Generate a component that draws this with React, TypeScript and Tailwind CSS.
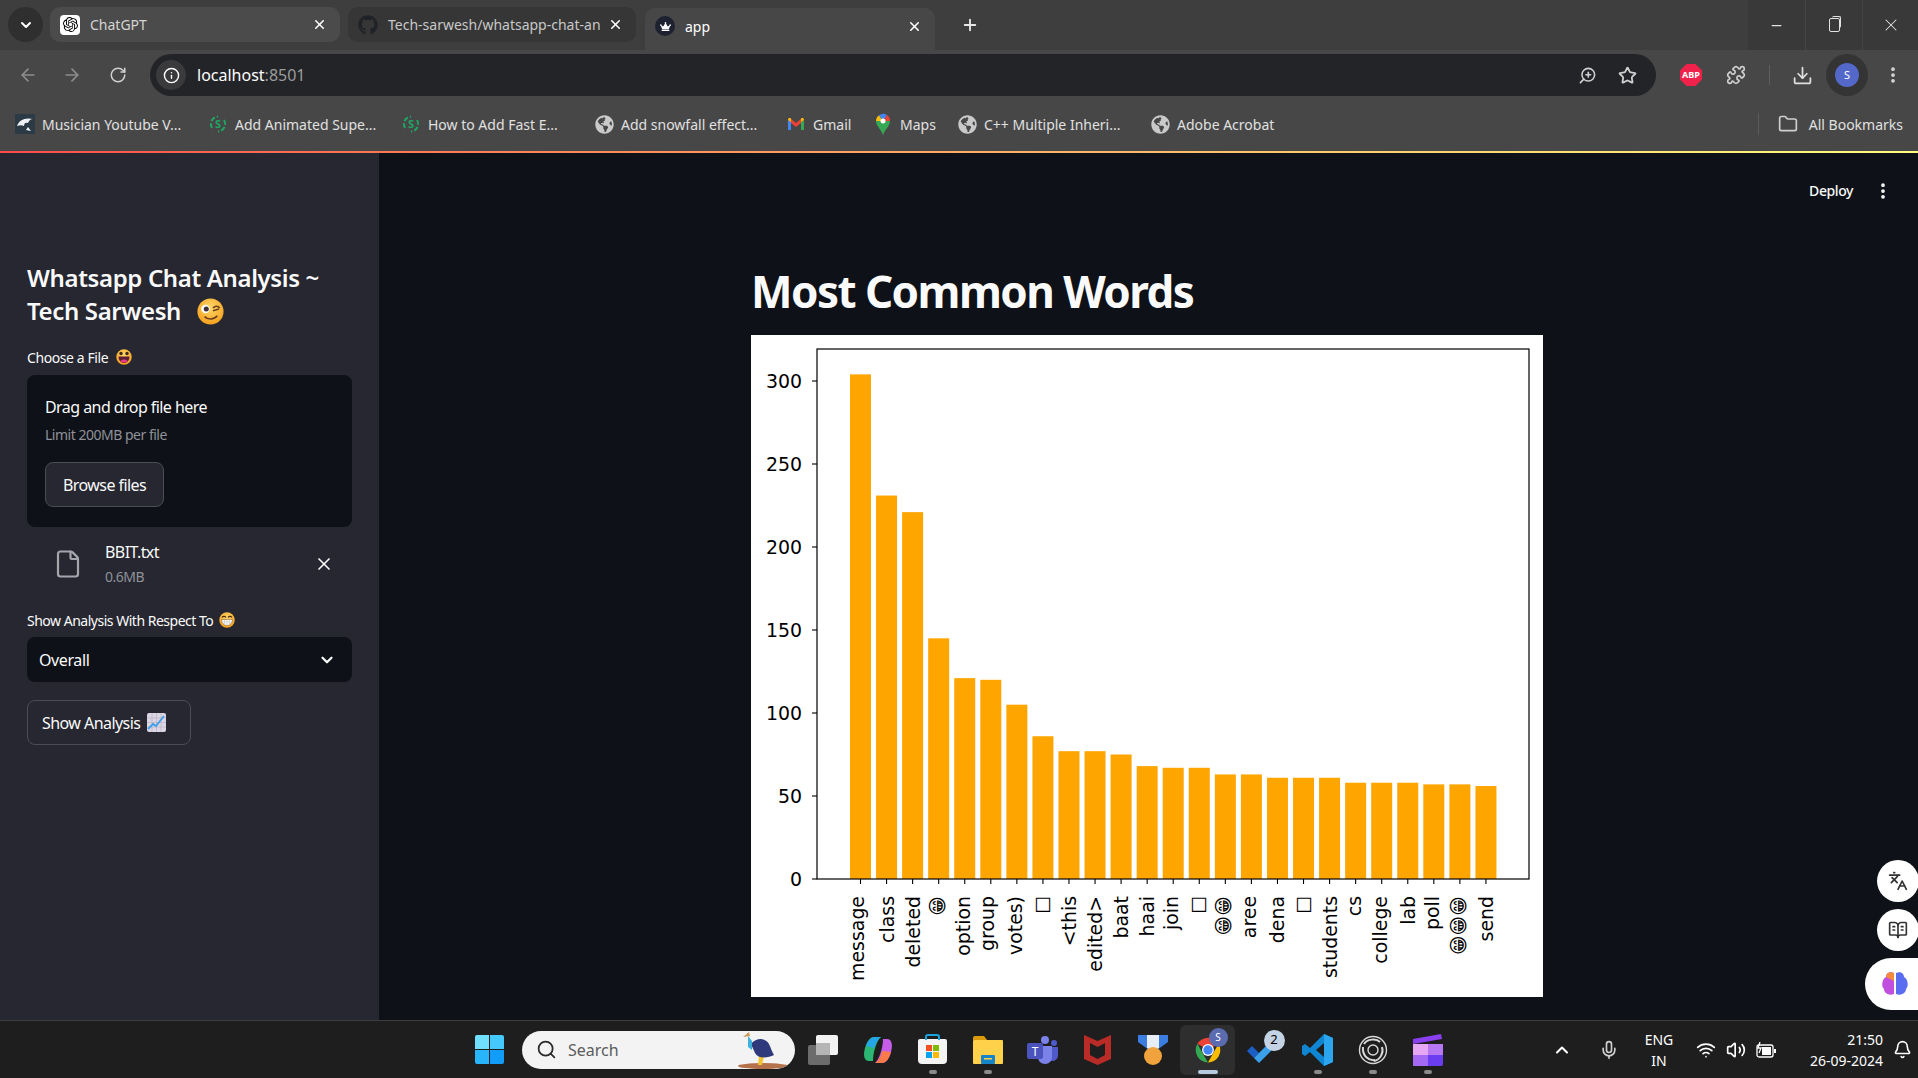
import { ArrowLeft, ArrowRight, RotateCw, Info, ZoomIn, Star, Puzzle, Download, EllipsisVertical, Folder, Minus, X, Plus, ChevronDown, ChevronUp, Mic, Wifi, Volume2, Bell, Search, File, Languages, BookOpenText } from 'lucide-react'
import { FaCrown, FaGithub, FaGlobeAmericas } from 'react-icons/fa'
import { SiOpenai } from 'react-icons/si'

const ui = "font-['Noto_Sans',sans-serif]"

function GreenIcon() {
  return (
    <svg width="20" height="20" viewBox="0 0 20 20" fill="none" stroke="#1fa463" strokeWidth="2">
      <path d="M4 14a7.5 7.5 0 0 1 6-11.4M16 6a7.5 7.5 0 0 1-6 11.4" strokeDasharray="5 2" />
      <text x="10" y="14" textAnchor="middle" fontSize="11" fontWeight="700" fill="#1fa463" stroke="none" fontFamily="Noto Sans">S</text>
    </svg>
  )
}

function PawIcon() {
  return (
    <svg width="20" height="20" viewBox="0 0 20 20">
      <rect width="20" height="20" fill="#2b3a45" />
      <path d="M2 12c2-6 8-9 16-7-3 0-4 2-5 4-2-1-4 0-4 3-2-1-4-1-7 0zM13 13l3 4-5-1z" fill="#eef2f4" />
    </svg>
  )
}

function GmailIcon() {
  return (
    <svg width="18" height="18" viewBox="0 0 18 18">
      <path d="M1 15V5l3 2v8z" fill="#4285f4" />
      <path d="M14 15V7l3-2v10z" fill="#34a853" />
      <path d="M14 4v4l-5 4-5-4V4l5 4z" fill="#ea4335" />
      <path d="M1 5c0-2 2-2.500 3-1.500V7zM17 5c0-2-2-2.500-3-1.500V7z" fill="#fbbc04" />
    </svg>
  )
}

function MapsIcon() {
  return (
    <svg width="16" height="22" viewBox="0 0 16 22">
      <path d="M8 22C6 16 1 13 1 8h14c0 5-5 8-7 14z" fill="#34a853" />
      <path d="M1 8a7 7 0 0 1 3-5.700L8 8z" fill="#fbbc04" />
      <path d="M4 2.300A7 7 0 0 1 12 2L8 8z" fill="#4285f4" />
      <path d="M12 2a7 7 0 0 1 3 6H8z" fill="#ea4335" />
      <circle cx="8" cy="8" r="2.500" fill="#fff" />
    </svg>
  )
}

const globe = <FaGlobeAmericas className="text-[19px] text-[#c9c9c9]" />

const bookmarks = [
  { icon: <PawIcon />, label: 'Musician Youtube V...', width: 'w-[193px]' },
  { icon: <GreenIcon />, label: 'Add Animated Supe...', width: 'w-[193px]' },
  { icon: <GreenIcon />, label: 'How to Add Fast E...', width: 'w-[193px]' },
  { icon: globe, label: 'Add snowfall effect...', width: 'w-[192px]' },
  { icon: <GmailIcon />, label: 'Gmail', width: 'w-[87px]' },
  { icon: <MapsIcon />, label: 'Maps', width: 'w-[84px]' },
  { icon: globe, label: 'C++ Multiple Inheri...', width: 'w-[193px]' },
  { icon: globe, label: 'Adobe Acrobat', width: 'w-[140px]' },
]

function TabStrip() {
  return (
    <div className="flex h-[50px] items-start bg-[#3e3e3e] pl-2">
      <div className="mt-[7px] flex h-[35px] w-[35px] items-center justify-center rounded-full bg-[#2f2f2f]">
        <ChevronDown size={16} strokeWidth={3} className="text-white" />
      </div>
      <div className="ml-[7px] mt-[7px] flex h-[35px] w-[290px] items-center rounded-[10px] bg-[#4b4b4b] pl-[10px] pr-[13px]">
        <span className="flex h-5 w-5 items-center justify-center rounded-[4px] bg-white"><SiOpenai size={15} className="text-black" /></span>
        <span className="ml-[10px] flex-1 text-[14px] text-[#d4d4d4]">ChatGPT</span>
        <X size={15} className="text-white" strokeWidth={2.500} />
      </div>
      <div className="ml-2 mt-[7px] flex h-[35px] w-[288px] items-center rounded-[10px] bg-[#363636] pl-[10px] pr-[13px]">
        <FaGithub size={20} className="text-[#1f2328]" />
        <span className="ml-[10px] w-[212px] overflow-hidden whitespace-nowrap text-[14px] text-[#c8c8c8]">Tech-sarwesh/whatsapp-chat-analysis</span>
        <X size={15} className="ml-auto text-white" strokeWidth={2.500} />
      </div>
      <div className="ml-[9px] mt-2 flex h-[42px] w-[290px] items-center rounded-t-[10px] bg-[#474747] pb-[6px] pl-[10px] pr-[13px]">
        <span className="flex h-5 w-5 items-center justify-center rounded-full bg-[#1e2230]"><FaCrown size={11} className="text-white" /></span>
        <span className="ml-[10px] flex-1 text-[14px] text-white">app</span>
        <X size={15} className="text-white" strokeWidth={2.500} />
      </div>
      <Plus size={18} strokeWidth={2.500} className="ml-[26px] mt-4 text-[#e8e8e8]" />
      <div className="ml-auto flex h-[50px] text-[#e2e2e2]">
        <div className="flex w-[57px] items-center justify-center bg-[#393939]"><Minus size={15} /></div>
        <div className="flex w-[57px] items-center justify-center border-l border-[#444] bg-[#393939]">
          <div className="relative h-[14px] w-[11px] rounded-[2px] border border-[#e2e2e2]">
            <div className="absolute -right-[2px] -top-[3px] h-[12px] w-[9px] rounded-[2px] border-r border-t border-[#e2e2e2]" />
          </div>
        </div>
        <div className="flex w-[56px] items-center justify-center border-l border-[#444] bg-[#393939]"><X size={20} strokeWidth={1.250} /></div>
      </div>
    </div>
  )
}

function Toolbar() {
  return (
    <div className="flex h-[50px] items-center bg-[#474747]">
      <ArrowLeft size={20} className="ml-[18px] text-[#8d8d8d]" />
      <ArrowRight size={20} className="ml-[24px] text-[#8d8d8d]" />
      <RotateCw size={18} className="ml-[27px] text-[#d0d0d0]" />
      <div className="ml-[23px] flex h-[42px] w-[1506px] items-center rounded-full bg-[#232427] pl-[6px]">
        <span className="flex h-[30px] w-[30px] items-center justify-center rounded-full bg-[#3a3a3d]"><Info size={17} className="text-white" /></span>
        <span className="ml-[11px] text-[16px] text-white">localhost<span className="text-[#9c9c9c]">:8501</span></span>
        <ZoomIn size={19} className="ml-auto -scale-x-100 text-[#d0d0d0]" />
        <Star size={19} strokeWidth={2.250} className="ml-[21px] mr-[19px] text-[#d0d0d0]" />
      </div>
      <div className="ml-[24px] flex h-[22px] w-[22px] items-center justify-center bg-[#f0224c] text-[9px] font-bold text-white [clip-path:polygon(30%_0,70%_0,100%_30%,100%_70%,70%_100%,30%_100%,0_70%,0_30%)]">ABP</div>
      <Puzzle size={20} className="ml-[24px] text-[#d0d0d0]" />
      <div className="ml-[23px] h-[20px] w-px bg-[#5e5e5e]" />
      <Download size={21} className="ml-[22px] text-[#e0e0e0]" />
      <span className="ml-[13px] flex h-[42px] w-[42px] items-center justify-center rounded-full bg-[#343434]">
        <span className="flex h-6 w-6 items-center justify-center rounded-full bg-[#5468c9] text-[11px] text-white">S</span>
      </span>
      <EllipsisVertical size={20} strokeWidth={2.500} className="ml-[15px] text-[#d8d8d8]" />
    </div>
  )
}

function BookmarkBar() {
  return (
    <div className="flex h-[51px] items-center bg-[#474747] pb-[3px] pl-[15px] text-[14px] text-[#e0e0e0]">
      {bookmarks.map((b) => (
        <div key={b.label} className={`flex items-center gap-[7px] whitespace-nowrap ${b.width}`}>
          <span className="flex w-5 justify-center">{b.icon}</span>
          {b.label}
        </div>
      ))}
      <div className="ml-auto h-[22px] w-px bg-[#5a5a5a]" />
      <Folder size={20} className="ml-[19px] text-[#cfcfcf]" />
      <span className="ml-[11px] mr-[15px] whitespace-nowrap">All Bookmarks</span>
    </div>
  )
}

function FaceBase({ children }: { children: React.ReactNode }) {
  return (
    <svg viewBox="0 0 32 32" className="h-full w-full">
      <defs>
        <radialGradient id="faceFill" cx="50%" cy="35%" r="70%">
          <stop offset="0%" stopColor="#ffd86a" />
          <stop offset="100%" stopColor="#f49b16" />
        </radialGradient>
      </defs>
      <circle cx="16" cy="16" r="15.500" fill="url(#faceFill)" />
      {children}
    </svg>
  )
}

function WinkFace() {
  return (
    <span className="ml-[10px] inline-block h-[27px] w-[27px] align-[-5px]">
      <FaceBase>
        <circle cx="10" cy="13" r="5" fill="#fff" />
        <circle cx="11" cy="13" r="3" fill="#40303a" />
        <path d="M19 12c2-3 6-3 8 0M19 15l7-2" stroke="#6b3f1d" strokeWidth="1.800" fill="none" />
        <path d="M9 22c4 4 11 4 15-1" stroke="#6b3f1d" strokeWidth="2" fill="none" />
      </FaceBase>
    </span>
  )
}

function LaughFace() {
  return (
    <span className="ml-[8px] inline-block h-4 w-4 align-[-3px]">
      <FaceBase>
        <circle cx="10" cy="9" r="3.500" fill="#402a20" />
        <circle cx="22" cy="9" r="3.500" fill="#402a20" />
        <path d="M5 15h22c0 8-5 13-11 13S5 23 5 15z" fill="#5b2036" />
        <path d="M9 24c3-4 11-4 14 0-3 4-11 4-14 0z" fill="#f0388a" />
      </FaceBase>
    </span>
  )
}

function GrinFace() {
  return (
    <span className="ml-[6px] inline-block h-4 w-4 align-[-3px]">
      <FaceBase>
        <path d="M6 11c2-3 6-3 8 0M18 11c2-3 6-3 8 0" stroke="#4a2c1a" strokeWidth="2.500" fill="none" />
        <path d="M5 15h22c0 7-5 12-11 12S5 22 5 15z" fill="#fff" stroke="#7b4a20" strokeWidth="1" />
        <path d="M5.500 20h21M11 15v11M16 15v12M21 15v11" stroke="#b9b0a8" strokeWidth="1" />
      </FaceBase>
    </span>
  )
}

function ChartEmoji() {
  return (
    <svg viewBox="0 0 19 19" className="ml-[7px] h-[19px] w-[19px]">
      <rect width="19" height="19" rx="2" fill="#dcd6e4" />
      <path d="M5 0v19M9.500 0v19M14 0v19M0 5h19M0 9.500h19M0 14h19" stroke="#b9b2c6" strokeWidth="0.700" />
      <path d="M1 16l5-5 3 2 8-10" stroke="#3a9ee8" strokeWidth="1.800" fill="none" />
    </svg>
  )
}

function Sidebar() {
  return (
    <aside className="flex w-[379px] shrink-0 flex-col bg-[#262730] pl-[27px] pr-[27px] pt-[108px] text-[#fafafa]">
      <h2 className="text-[24px] font-semibold leading-[33px] tracking-[-0.015em]">
        Whatsapp Chat Analysis ~<br />Tech Sarwesh <WinkFace />
      </h2>
      <label className="mt-[20px] flex h-[20px] items-center text-[14px] tracking-[-0.03em]">Choose a File <LaughFace /></label>
      <div className="mt-2 flex h-[152px] flex-col items-start rounded-lg bg-[#0e1117] pl-[18px] pt-[20px]">
        <span className="text-[16px] leading-[24px] tracking-[-0.035em]">Drag and drop file here</span>
        <span className="mt-[6px] text-[14px] leading-[20px] tracking-[-0.035em] text-[#8f9299]">Limit 200MB per file</span>
        <button className="mt-[17px] h-[45px] w-[119px] rounded-lg border border-[#4b4c55] bg-[#262730] text-[16px] tracking-[-0.035em]">Browse files</button>
      </div>
      <div className="mt-[13px] flex items-center pl-[26px] pr-[18px]">
        <File size={30} strokeWidth={1.750} className="text-[#a4a6ae]" />
        <div className="ml-[22px] flex-1">
          <div className="text-[16px] leading-[24px] tracking-[-0.035em]">BBIT.txt</div>
          <div className="mt-[3px] text-[14px] leading-[20px] tracking-[-0.035em] text-[#8f9299]">0.6MB</div>
        </div>
        <X size={20} />
      </div>
      <label className="mt-[23px] flex h-[20px] items-center text-[14px] tracking-[-0.035em]">Show Analysis With Respect To <GrinFace /></label>
      <div className="mt-[7px] flex h-[45px] items-center rounded-lg bg-[#0e1117] pl-[12px] pr-[16px] text-[16px] tracking-[-0.025em]">
        Overall
        <ChevronDown size={18} strokeWidth={3} className="ml-auto" />
      </div>
      <button className="mt-[18px] flex h-[45px] w-[164px] items-center rounded-lg border border-[#4b4c55] pl-[14px] text-[16px] tracking-[-0.035em]">
        Show Analysis <ChartEmoji />
      </button>
    </aside>
  )
}

const words: [string, number][] = [
  ['message', 304], ['class', 231], ['deleted', 221], ['😁', 145], ['option', 121], ['group', 120], ['votes)', 105],
  ['□', 86], ['<this', 77], ['edited>', 77], ['baat', 75], ['haai', 68], ['join', 67], ['□', 67], ['😁😁', 63],
  ['aree', 63], ['dena', 61], ['□', 61], ['students', 61], ['cs', 58], ['college', 58], ['lab', 58], ['poll', 57],
  ['😁😁😁', 57], ['send', 56],
]

// shifts the baseline so the word's box (not its baseline) sits on the tick, like matplotlib
function baselineShift(w: string) {
  const asc = /[bdfhklti()<>j]/.test(w)
  const desc = /[gpqyj()]/.test(w)
  if (asc && desc) return 5
  if (asc) return 7
  if (desc) return 3
  return 5
}

function BarChart() {
  const chartFont = "DejaVu Sans, sans-serif"
  const bottom = 544
  return (
    <svg width="792" height="662" viewBox="0 0 792 662" className="block bg-white">
      {words.map(([w, v], i) => {
        const x = 109.500 + i * 26.060
        return (
          <g key={i}>
            <rect x={x - 10.500} y={bottom - v * 1.66} width="21" height={v * 1.66} fill="#ffa500" />
            <line x1={x} x2={x} y1={bottom} y2={bottom + 5} stroke="#000" strokeWidth="1.100" />
            <text
              transform={`translate(${x + baselineShift(w)} 561) rotate(-90)`}
              textAnchor="end"
              fontSize="18.900"
              fontFamily={chartFont}
              fill="#000"
            >
              {w}
            </text>
          </g>
        )
      })}
      {[0, 50, 100, 150, 200, 250, 300].map((t) => {
        const y = bottom - t * 1.66
        return (
          <g key={t}>
            <line x1="61" x2="66" y1={y} y2={y} stroke="#000" strokeWidth="1.100" />
            <text x="51" y={y + 7} textAnchor="end" fontSize="18.900" fontFamily={chartFont} fill="#000">{t}</text>
          </g>
        )
      })}
      <rect x="66" y="14" width="712" height="530" fill="none" stroke="#000" strokeWidth="1.200" />
    </svg>
  )
}

function FloatingTools() {
  return (
    <div className="absolute bottom-[10px] right-0 flex flex-col items-end gap-[7px] text-[#333]">
      <div className="mr-[-1px] flex h-[42px] w-[42px] items-center justify-center rounded-full bg-white"><Languages size={20} /></div>
      <div className="mr-[-1px] flex h-[42px] w-[42px] items-center justify-center rounded-full bg-white"><BookOpenText size={20} /></div>
      <div className="flex h-[52px] w-[53px] items-center rounded-l-full bg-white pl-[16px]">
        <svg width="28" height="26" viewBox="0 0 28 26">
          <path d="M13 2C9 0 5 2 5 6 1 8 0 15 3 18c0 4 5 7 10 5z" fill="#c04fe0" />
          <path d="M13 2C9 0 5 2 5 6l8 4z" fill="#f58a3c" />
          <path d="M15 2c4-2 8 0 8 4 4 2 5 9 2 12 0 4-5 7-10 5z" fill="#5a6df0" />
        </svg>
      </div>
    </div>
  )
}

function Main() {
  return (
    <main className="relative flex flex-1 flex-col bg-[#0e1117] text-[#fafafa]">
      <div className="flex h-[75px] items-center justify-end pr-[25px]">
        <span className="text-[14px] font-medium tracking-[-0.03em]">Deploy</span>
        <EllipsisVertical size={20} strokeWidth={2.500} className="ml-[20px]" />
      </div>
      <div className="pl-[372px]">
        <h1 className="mt-[33px] text-[44px] font-bold leading-[60px] tracking-[-0.035em]">Most Common Words</h1>
        <div className="mt-[14px]"><BarChart /></div>
      </div>
      <FloatingTools />
    </main>
  )
}

function TaskItem({ children, dot, active }: { children: React.ReactNode; dot?: boolean; active?: boolean }) {
  return (
    <div className={`relative flex h-[50px] w-[55px] items-center justify-center rounded-md ${active ? 'bg-[#2e2e2e]' : ''}`}>
      {children}
      {dot && <span className={`absolute bottom-[1px] h-[4px] rounded-full ${active ? 'w-[20px] bg-[#b7c9dc]' : 'w-[8px] bg-[#8a8a8a]'}`} />}
    </div>
  )
}

function Taskbar() {
  return (
    <footer className="flex h-[58px] items-center border-t border-[#3c3c3c] bg-[#1e1e1e] pl-[475px] text-white">
      <div className="grid h-[29px] w-[29px] grid-cols-2 gap-[1px]">
        <span className="rounded-tl-[2px] bg-[#6fe0ff]" />
        <span className="rounded-tr-[2px] bg-[#45c8fb]" />
        <span className="rounded-bl-[2px] bg-[#28b4fb]" />
        <span className="rounded-br-[2px] bg-[#119cf8]" />
      </div>
      <div className="ml-[18px] flex h-[38px] w-[273px] items-center overflow-hidden rounded-full bg-[#f3f3f3] pl-[14px] text-[16px] text-[#5c5c5c]">
        <Search size={21} className="text-[#2a2a2a]" />
        <span className="ml-[11px]">Search</span>
        <svg width="56" height="38" viewBox="0 0 56 38" className="ml-auto mr-[2px]">
          <ellipse cx="26" cy="35" rx="25" ry="3" fill="#b5714a" />
          <path d="M22 25l-1 9h4l2-9z" fill="#f2c230" />
          <path d="M14 13c5-6 14-7 18 0 2 4 3 8 5 11-6 3-16 4-19-2z" fill="#2e3a7c" />
          <path d="M11 5l4 5v9l-4-3z" fill="#3fb1d9" />
          <path d="M6 6l6-5 1 4z" fill="#c99a5a" />
        </svg>
      </div>
      <div className="flex">
        <TaskItem>
          <div className="relative h-[30px] w-[30px]">
            <span className="absolute bottom-0 left-0 h-[20px] w-[22px] rounded-[2px] bg-[#6c6c6c]" />
            <span className="absolute right-0 top-0 h-[20px] w-[22px] rounded-[2px] bg-[#f2f2f2]" />
            <span className="absolute bottom-[10px] left-[8px] h-[12px] w-[14px] bg-[#b5b5b5]" />
          </div>
        </TaskItem>
        <TaskItem>
          <svg width="30" height="30" viewBox="0 0 30 30">
            <path d="M11 2h7c-4 3-8 15-8 24H6C1 26 0 20 2 13 4 6 7 2 11 2z" fill="#2bb673" />
            <path d="M3 11c2-5 5-9 8-9h7c-3 2-5 6-7 11z" fill="#25a6e8" />
            <path d="M19 28h-7c4-3 8-15 8-24h4c5 0 6 6 4 13-2 7-5 11-9 11z" fill="#c65de8" />
            <path d="M12 28c3-2 6-6 7-12l9 1c-2 7-5 11-9 11z" fill="#fa7a4a" />
          </svg>
        </TaskItem>
        <TaskItem dot>
          <div className="relative mt-[4px] flex h-[25px] w-[29px] items-center justify-center rounded-b-[4px] rounded-t-[2px] bg-[#f4f4f4]">
            <span className="absolute -top-[5px] h-[6px] w-[15px] rounded-t-[3px] border-x-2 border-t-2 border-[#1aa5e0]" />
            <span className="grid grid-cols-2 gap-[1px]">
              <span className="h-[6px] w-[6px] bg-[#f25022]" /><span className="h-[6px] w-[6px] bg-[#7fba00]" />
              <span className="h-[6px] w-[6px] bg-[#00a4ef]" /><span className="h-[6px] w-[6px] bg-[#ffb900]" />
            </span>
          </div>
        </TaskItem>
        <TaskItem dot>
          <svg width="30" height="28" viewBox="0 0 30 28">
            <path d="M0 2a2 2 0 0 1 2-2h9l3 4H0z" fill="#d99a0c" />
            <rect y="4" width="30" height="24" rx="1" fill="#ffd04a" />
            <rect x="8" y="19" width="14" height="9" rx="1" fill="#1684c8" />
            <rect x="11" y="22" width="8" height="1.500" fill="#ffd04a" />
          </svg>
        </TaskItem>
        <TaskItem>
          <svg width="31" height="28" viewBox="0 0 31 28">
            <circle cx="18" cy="4" r="4" fill="#7b83eb" />
            <circle cx="27" cy="7" r="3" fill="#5059c9" />
            <path d="M21 11h10v8c0 4-3 6-6 6-2 0-4-1-4-3z" fill="#5059c9" />
            <path d="M11 10h14v11c0 4-3 7-7 7s-7-3-7-7z" fill="#7b83eb" />
            <rect y="7" width="16" height="16" rx="2" fill="#4b53bc" />
            <text x="8" y="20" textAnchor="middle" fontSize="12" fontFamily="Noto Sans" fill="#fff">T</text>
          </svg>
        </TaskItem>
        <TaskItem>
          <svg width="27" height="30" viewBox="0 0 27 30">
            <path d="M0 0l13.500 6L27 0v24l-13.500 6L0 24z" fill="#b92b27" />
            <path d="M6 8l7.500 4L21 8v12l-7.500 4L6 20z" fill="#1e1e1e" />
          </svg>
        </TaskItem>
        <TaskItem>
          <svg width="30" height="30" viewBox="0 0 30 30">
            <path d="M0 0h30v7L19 15h-8L0 7z" fill="#3b7de0" />
            <path d="M9 0h12v13l-6 3-6-3z" fill="#e8eef8" />
            <ellipse cx="15" cy="21" rx="9" ry="9" fill="#f0a33c" />
          </svg>
        </TaskItem>
        <TaskItem dot active>
          <div className="relative">
            <svg width="30" height="30" viewBox="0 0 48 48">
              <path d="M24 24L7 14a20 20 0 0 1 34 0z" fill="#ea4335" />
              <path d="M24 44A20 20 0 0 1 7 14l10 18z" fill="#34a853" />
              <path d="M41 14a20 20 0 0 1-17 30l10-18z" fill="#fbbc04" />
              <circle cx="24" cy="24" r="9.500" fill="#fff" />
              <circle cx="24" cy="24" r="7.500" fill="#4285f4" />
            </svg>
            <span className="absolute -right-[5px] -top-[7px] flex h-[19px] w-[19px] items-center justify-center rounded-full bg-[#5a6bb0] text-[10px] text-white">S</span>
          </div>
        </TaskItem>
        <TaskItem>
          <div className="relative">
            <svg width="32" height="26" viewBox="0 0 32 26">
              <path d="M0 14l5-5 7 7-5 5z" fill="#1b5fc4" />
              <path d="M7 21l5 5L32 6l-5-5z" fill="#3aa0ea" />
            </svg>
            <span className="absolute -right-[6px] -top-[7px] flex h-[21px] w-[21px] items-center justify-center rounded-full bg-[#c3d3e4] text-[13px] text-black">2</span>
          </div>
        </TaskItem>
        <TaskItem dot>
          <svg width="31" height="32" viewBox="0 0 31 32">
            <path d="M22 0l9 4v24l-9 4L8 18l-5 4-3-2v-8l3-2 5 4z" fill="#0e86d4" />
            <path d="M22 0l9 4v24l-9 4z" fill="#2ba5ee" />
            <path d="M22 9l-8 7 8 7z" fill="#1e1e1e" />
          </svg>
        </TaskItem>
        <TaskItem dot>
          <svg width="30" height="30" viewBox="0 0 30 30" fill="none" stroke="#d8d8d8" strokeWidth="1.400">
            <circle cx="15" cy="15" r="13.500" />
            <circle cx="15" cy="15" r="5" />
            <path d="M6 9c3-5 12-6 16-2M24 12c2 6-2 13-8 14M17 25C11 26 4 21 5 12" strokeWidth="2" />
          </svg>
        </TaskItem>
        <TaskItem dot>
          <svg width="30" height="32" viewBox="0 0 30 32">
            <path d="M0 5L28 0l1 5L0 10z" fill="#8a3ff0" />
            <rect y="10" width="30" height="22" rx="2" fill="#6a3df0" />
            <rect y="10" width="15" height="11" fill="#e6a8f6" />
            <rect x="15" y="10" width="15" height="11" fill="#b577f2" />
            <rect y="21" width="15" height="11" fill="#a56af4" />
          </svg>
        </TaskItem>
      </div>
      <ChevronUp size={20} strokeWidth={2.500} className="ml-[97px]" />
      <Mic size={20} className="ml-[27px] text-[#d0d0d0]" />
      <div className="ml-[22px] flex w-[36px] flex-col items-center text-[14px] leading-[21px]"><span>ENG</span><span>IN</span></div>
      <Wifi size={20} className="ml-[19px]" />
      <Volume2 size={20} className="ml-[10px]" />
      <svg width="20" height="16" viewBox="0 0 20 16" className="ml-[10px]">
        <rect x="1" y="3" width="16" height="12" rx="2" fill="none" stroke="#fff" strokeWidth="1.300" />
        <rect x="6" y="5" width="9" height="8" fill="#fff" />
        <rect x="18" y="7" width="2" height="4" fill="#fff" />
        <path d="M4 0L2 6h3L3 11" stroke="#fff" fill="none" strokeWidth="1.300" />
      </svg>
      <div className="ml-[17px] flex w-[90px] flex-col items-end text-[14px] leading-[21px]"><span>21:50</span><span>26-09-2024</span></div>
      <Bell size={19} className="ml-[10px]" />
    </footer>
  )
}

export default function App() {
  return (
    <div className={`flex h-[1078px] w-[1918px] flex-col overflow-hidden ${ui}`}>
      <TabStrip />
      <Toolbar />
      <BookmarkBar />
      <div className="h-[2px] bg-gradient-to-r from-[#ff4b4b] to-[#fffd80]" />
      <div className="flex min-h-0 flex-1">
        <Sidebar />
        <Main />
      </div>
      <Taskbar />
    </div>
  )
}
